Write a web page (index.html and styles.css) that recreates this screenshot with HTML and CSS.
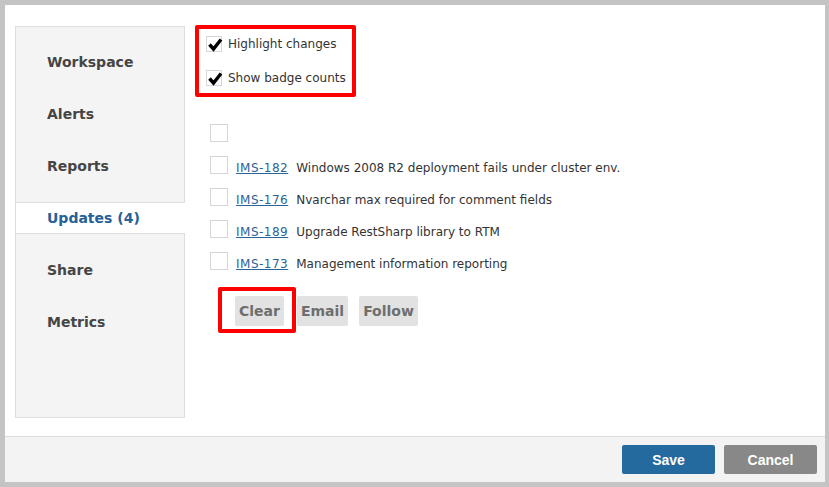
FILE: index.html
```html
<!DOCTYPE html>
<html>
<head>
<meta charset="utf-8">
<link rel="stylesheet" href="styles.css">
</head>
<body>
<div class="dialog">
  <div class="main">
    <nav class="sidebar">
      <div class="nav-item">Workspace</div>
      <div class="nav-item">Alerts</div>
      <div class="nav-item">Reports</div>
      <div class="nav-item active">Updates (4)</div>
      <div class="nav-item">Share</div>
      <div class="nav-item">Metrics</div>
    </nav>
    <section class="content">
      <div class="options">
        <label class="opt"><span class="cb checked"><svg viewBox="0 0 16 16" width="16" height="16"><path d="M2.5 7.5 L6.5 12 L14 2.5" fill="none" stroke="#000" stroke-width="3.4" stroke-linejoin="miter"/></svg></span>Highlight changes</label>
        <label class="opt"><span class="cb checked"><svg viewBox="0 0 16 16" width="16" height="16"><path d="M2.5 7.5 L6.5 12 L14 2.5" fill="none" stroke="#000" stroke-width="3.4" stroke-linejoin="miter"/></svg></span>Show badge counts</label>
      </div>
      <div class="list">
        <div class="row"><span class="cb"></span></div>
        <div class="row"><span class="cb"></span><a class="key">IMS-182</a><span class="txt">Windows 2008 R2 deployment fails under cluster env.</span></div>
        <div class="row"><span class="cb"></span><a class="key">IMS-176</a><span class="txt">Nvarchar max required for comment fields</span></div>
        <div class="row"><span class="cb"></span><a class="key">IMS-189</a><span class="txt">Upgrade RestSharp library to RTM</span></div>
        <div class="row"><span class="cb"></span><a class="key">IMS-173</a><span class="txt">Management information reporting</span></div>
      </div>
      <div class="actions">
        <button class="btn-light clear">Clear</button>
        <button class="btn-light">Email</button>
        <button class="btn-light">Follow</button>
      </div>
      <div class="mark mark-options"></div>
      <div class="mark mark-clear"></div>
    </section>
  </div>
  <footer class="footer">
    <button class="btn save">Save</button>
    <button class="btn cancel">Cancel</button>
  </footer>
</div>
</body>
</html>
```

FILE: styles.css
```css
html, body {
  margin: 0;
  padding: 0;
  background: #c4c4c4;
  font-family: "DejaVu Sans", Verdana, sans-serif;
}
.dialog {
  margin: 5px 4px 0 5px;
  height: 477px;
  background: #fff;
  display: flex;
  flex-direction: column;
}
.main {
  flex: 1;
  min-height: 0;
  display: flex;
  align-items: flex-start;
  padding: 21px 0 0 10px;
}
.sidebar {
  width: 168px;
  height: 370px;
  background: #f4f4f4;
  border: 1px solid #dedede;
  padding-top: 20px;
  flex-shrink: 0;
}
.nav-item {
  height: 31px;
  line-height: 31px;
  margin-bottom: 21px;
  padding-left: 31px;
  font-size: 14px;
  font-weight: bold;
  color: #454545;
}
.nav-item.active {
  background: #fff;
  color: #266198;
  border-top: 1px solid #dedede;
  border-bottom: 1px solid #dedede;
  margin-right: -1px;
  height: 30px;
  line-height: 30px;
  margin-top: -1px;
}
.content {
  position: relative;
  flex: 1;
  padding: 10px 0 0 21px;
}
.options {
  display: flex;
  flex-direction: column;
  gap: 18px;
}
.opt {
  display: flex;
  align-items: center;
  gap: 6px;
  font-size: 12px;
  color: #333;
  height: 16px;
}
.cb {
  width: 16px;
  height: 16px;
  box-sizing: border-box;
  border: 1px solid #d6d6d6;
  background: #fff;
  display: inline-block;
  flex-shrink: 0;
  position: relative;
}
.cb svg {
  position: absolute;
  left: 0;
  top: 0;
}
.list {
  margin-top: 38px;
  padding-left: 4px;
  display: flex;
  flex-direction: column;
  gap: 14px;
}
.row {
  display: flex;
  align-items: flex-start;
  height: 18px;
  font-size: 12px;
  color: #333;
}
.row .cb {
  width: 18px;
  height: 18px;
  margin-right: 8px;
}
.key, .txt {
  line-height: 18px;
  margin-top: 3px;
}
.key {
  color: #2a6496;
  text-decoration: underline;
  letter-spacing: 0.5px;
  margin-right: 8px;
}
.actions {
  display: flex;
  gap: 11px;
  margin-top: 26px;
  padding-left: 29px;
}
.btn-light {
  border: none;
  border-radius: 2px;
  background: #e2e2e2;
  color: #6e6e6e;
  font-family: "DejaVu Sans", Verdana, sans-serif;
  font-weight: bold;
  font-size: 14px;
  height: 30px;
  padding: 0 4px;
}
.btn-light.clear {
  margin-right: 2px;
}
.mark {
  position: absolute;
  border: 4px solid #f00;
  border-radius: 2px;
  box-sizing: border-box;
}
.mark-options {
  left: 10px;
  top: -1px;
  width: 161px;
  height: 72px;
}
.mark-clear {
  left: 33px;
  top: 261px;
  width: 78px;
  height: 46px;
}
.footer {
  height: 46px;
  box-sizing: border-box;
  border-top: 1px solid #dcdcdc;
  background: #f3f3f3;
  display: flex;
  justify-content: flex-end;
  align-items: center;
  gap: 9px;
  padding: 0 8px 0 0;
}
.btn {
  width: 93px;
  height: 29px;
  border: none;
  border-radius: 2px;
  color: #fff;
  font-family: "Liberation Sans", Arial, sans-serif;
  font-weight: bold;
  font-size: 14px;
}
.save { background: #246a9e; }
.cancel { background: #888; }
```
